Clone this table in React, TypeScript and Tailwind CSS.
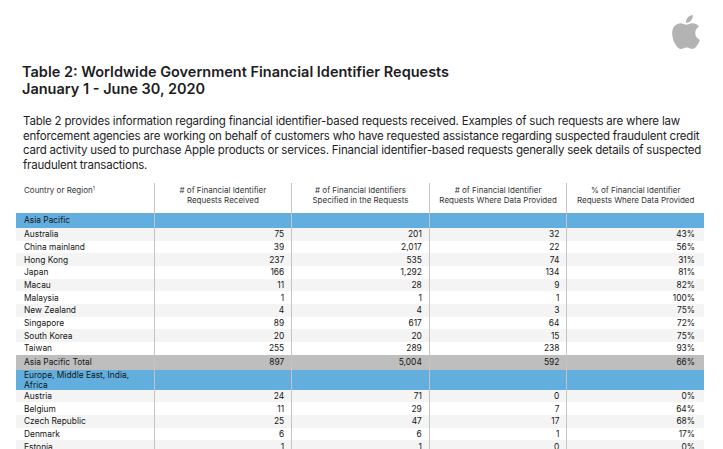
import React from 'react';

type Row = { name: React.ReactNode; vals?: string[]; kind?: 'region' | 'total' | 'row'; tall?: boolean };

const rows: Row[] = [
  { name: 'Asia Pacific', kind: 'region' },
  { name: 'Australia', vals: ['75', '201', '32', '43%'] },
  { name: 'China mainland', vals: ['39', '2,017', '22', '56%'] },
  { name: 'Hong Kong', vals: ['237', '535', '74', '31%'] },
  { name: 'Japan', vals: ['166', '1,292', '134', '81%'] },
  { name: 'Macau', vals: ['11', '28', '9', '82%'] },
  { name: 'Malaysia', vals: ['1', '1', '1', '100%'] },
  { name: 'New Zealand', vals: ['4', '4', '3', '75%'] },
  { name: 'Singapore', vals: ['89', '617', '64', '72%'] },
  { name: 'South Korea', vals: ['20', '20', '15', '75%'] },
  { name: 'Taiwan', vals: ['255', '289', '238', '93%'] },
  { name: 'Asia Pacific Total', vals: ['897', '5,004', '592', '66%'], kind: 'total' },
  { name: <>Europe, Middle East, India,<br />Africa</>, kind: 'region', tall: true },
  { name: 'Austria', vals: ['24', '71', '0', '0%'] },
  { name: 'Belgium', vals: ['11', '29', '7', '64%'] },
  { name: 'Czech Republic', vals: ['25', '47', '17', '68%'] },
  { name: 'Denmark', vals: ['6', '6', '1', '17%'] },
  { name: 'Estonia', vals: ['1', '1', '0', '0%'] },
];

const headers = [
  ['# of Financial Identifier', 'Requests Received'],
  ['# of Financial Identifiers', 'Specified in the Requests'],
  ['# of Financial Identifier', 'Requests Where Data Provided'],
  ['% of Financial Identifier', 'Requests Where Data Provided'],
];

const AppleLogo = () => (
  <svg width="28" height="34" viewBox="0 0 814 1000" fill="#b3b3b3">
    <path d="M788.1 340.9c-5.8 4.5-108.2 62.2-108.2 190.5 0 148.4 130.3 200.9 134.2 202.2-.6 3.2-20.7 71.9-68.7 141.9-42.8 61.6-87.5 123.1-155.5 123.1s-85.5-39.5-164-39.5c-76.5 0-103.7 40.8-165.9 40.8s-105.6-57-155.5-127C46.7 790.7 0 663 0 541.8c0-194.4 126.4-297.5 250.8-297.5 66.1 0 121.2 43.4 162.7 43.4 39.5 0 101.1-46 176.3-46 28.5 0 130.9 2.6 198.3 99.2zm-234-181.5c31.1-36.9 53.1-88.1 53.1-139.3 0-7.1-.6-14.3-1.9-20.1-50.6 1.9-110.8 33.7-147.1 75.8-28.5 32.4-55.1 83.6-55.1 135.5 0 7.8 1.3 15.6 1.9 18.1 3.2.6 8.4 1.3 13.6 1.3 45.4 0 102.5-30.4 135.5-71.3z" />
  </svg>
);

export default function App() {
  let stripe = 0;
  return (
    <div className="w-[723px] h-[449px] overflow-hidden bg-white text-[#1d1d1f] font-['Inter',sans-serif]">
      <div className="flex justify-end pt-[15px] pr-[23px]">
        <AppleLogo />
      </div>

      <h1 className="mt-[14px] pl-[22px] text-[14.5px] leading-[17px] font-semibold">
        Table 2: Worldwide Government Financial Identifier Requests
        <br />
        January 1 - June 30, 2020
      </h1>

      <p className="mt-[17px] pl-[23px] w-[710px] text-[11.5px] leading-[14.7px] tracking-[-0.2px]">
        Table 2 provides information regarding financial identifier-based requests received. Examples of such requests are where law
        <br />
        enforcement agencies are working on behalf of customers who have requested assistance regarding suspected fraudulent credit
        <br />
        card activity used to purchase Apple products or services. Financial identifier-based requests generally seek details of suspected
        <br />
        fraudulent transactions.
      </p>

      <div className="mt-[10px] ml-[16px] w-[688px] text-[8.4px] text-[#151515]">
        <div className="grid grid-cols-5 h-[30px] text-[8px] leading-[10px] text-[#333]">
          <div className="pl-[8px] pt-[2px]">
            Country or Region<sup className="text-[5px]">1</sup>
          </div>
          {headers.map((h, i) => (
            <div key={i} className="border-l border-[#c4c4c4] text-center pt-[2px]">
              {h[0]}
              <br />
              {h[1]}
            </div>
          ))}
        </div>

        {rows.map((r, i) => {
          let bg = 'bg-white';
          if (r.kind === 'region') {
            bg = 'bg-[#62afdf]';
            stripe = 0;
          } else if (r.kind === 'total') {
            bg = 'bg-[#bebebe]';
          } else {
            bg = stripe % 2 === 0 ? 'bg-[#f4f4f4]' : 'bg-white';
            stripe++;
          }
          const h = r.tall ? 'h-[20px]' : r.kind ? 'h-[15px]' : 'h-[12.7px]';
          return (
            <div key={i} className={`grid grid-cols-5 ${bg} ${h} leading-[10px]`}>
              <div className="pl-[8px] pr-[4px] flex items-center">{r.name}</div>
              {[0, 1, 2, 3].map((c) => (
                <div key={c} className={`border-l border-[#c4c4c4] flex items-center justify-end ${c === 3 ? 'pr-[9px]' : 'pr-[7px]'}`}>
                  {r.vals ? r.vals[c] : ''}
                </div>
              ))}
            </div>
          );
        })}
      </div>
    </div>
  );
}
